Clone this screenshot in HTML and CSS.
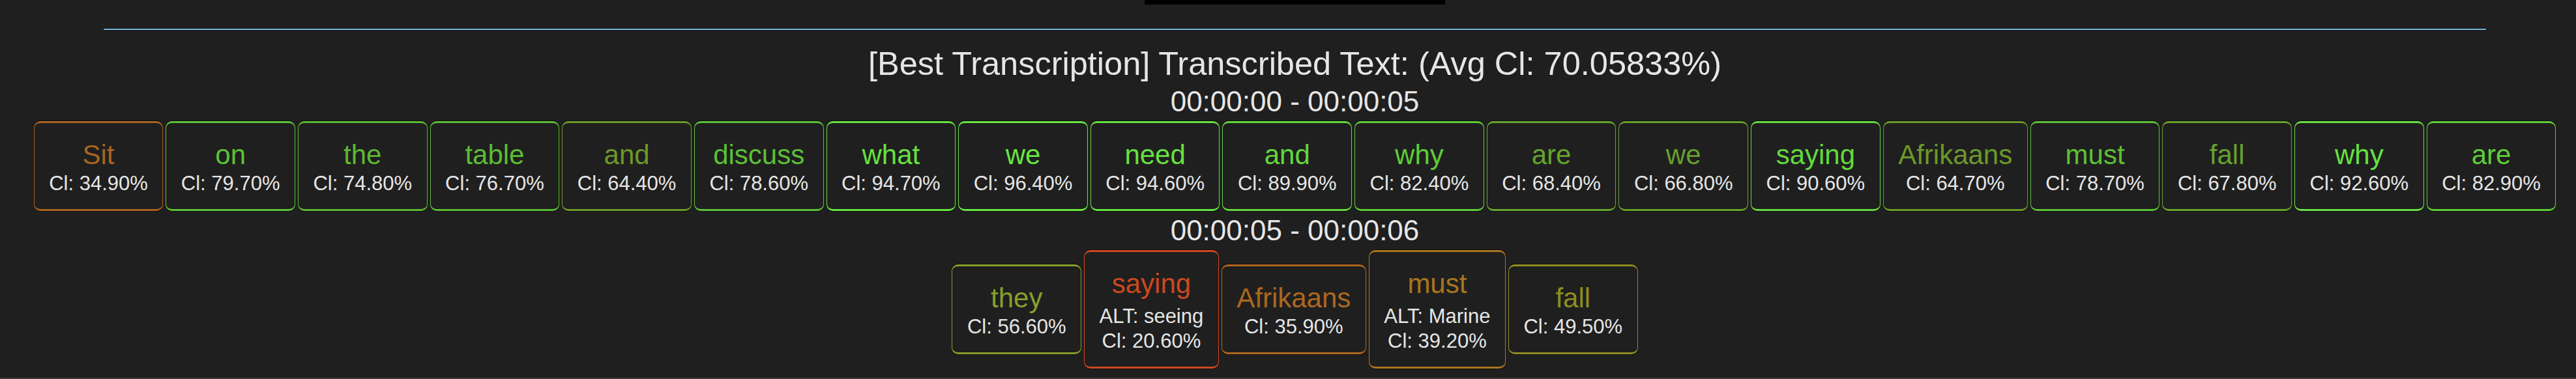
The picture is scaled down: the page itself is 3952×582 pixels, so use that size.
FILE: index.html
```html
<!DOCTYPE html>
<html lang="en">
<head>
<meta charset="utf-8">
<title>Best Transcription</title>
<link rel="stylesheet" href="styles.css">
</head>
<body>
<div class="page">
  <div class="topbar"></div>
  <div class="rule"></div>
  <h1 class="title">[Best Transcription] Transcribed Text: (Avg Cl: 70.05833%)</h1>

  <section class="segment">
    <div class="time">00:00:00 - 00:00:05</div>
    <div class="words">
      <div class="word" style="--c:#a8631f"><div class="w">Sit</div><div class="ci">Cl: 34.90%</div></div>
      <div class="word" style="--c:#5bc335"><div class="w">on</div><div class="ci">Cl: 79.70%</div></div>
      <div class="word" style="--c:#5cb732"><div class="w">the</div><div class="ci">Cl: 74.80%</div></div>
      <div class="word" style="--c:#5bbd33"><div class="w">table</div><div class="ci">Cl: 76.70%</div></div>
      <div class="word" style="--c:#6c982a"><div class="w">and</div><div class="ci">Cl: 64.40%</div></div>
      <div class="word" style="--c:#5bc134"><div class="w">discuss</div><div class="ci">Cl: 78.60%</div></div>
      <div class="word" style="--c:#66e23f"><div class="w">what</div><div class="ci">Cl: 94.70%</div></div>
      <div class="word" style="--c:#68e641"><div class="w">we</div><div class="ci">Cl: 96.40%</div></div>
      <div class="word" style="--c:#66e23f"><div class="w">need</div><div class="ci">Cl: 94.60%</div></div>
      <div class="word" style="--c:#62d83b"><div class="w">and</div><div class="ci">Cl: 89.90%</div></div>
      <div class="word" style="--c:#5ecc38"><div class="w">why</div><div class="ci">Cl: 82.40%</div></div>
      <div class="word" style="--c:#64a52c"><div class="w">are</div><div class="ci">Cl: 68.40%</div></div>
      <div class="word" style="--c:#67a02c"><div class="w">we</div><div class="ci">Cl: 66.80%</div></div>
      <div class="word" style="--c:#63da3c"><div class="w">saying</div><div class="ci">Cl: 90.60%</div></div>
      <div class="word" style="--c:#6b992a"><div class="w">Afrikaans</div><div class="ci">Cl: 64.70%</div></div>
      <div class="word" style="--c:#5bc134"><div class="w">must</div><div class="ci">Cl: 78.70%</div></div>
      <div class="word" style="--c:#65a32c"><div class="w">fall</div><div class="ci">Cl: 67.80%</div></div>
      <div class="word" style="--c:#67e041"><div class="w">why</div><div class="ci">Cl: 92.60%</div></div>
      <div class="word" style="--c:#5ecd38"><div class="w">are</div><div class="ci">Cl: 82.90%</div></div>
    </div>
  </section>

  <section class="segment">
    <div class="time">00:00:05 - 00:00:06</div>
    <div class="words">
      <div class="word" style="--c:#879f2b"><div class="w">they</div><div class="ci">Cl: 56.60%</div></div>
      <div class="word" style="--c:#cc4820"><div class="w">saying</div><div class="alt">ALT: seeing</div><div class="ci">Cl: 20.60%</div></div>
      <div class="word" style="--c:#ad671f"><div class="w">Afrikaans</div><div class="ci">Cl: 35.90%</div></div>
      <div class="word" style="--c:#a9761c"><div class="w">must</div><div class="alt">ALT: Marine</div><div class="ci">Cl: 39.20%</div></div>
      <div class="word" style="--c:#8e8d20"><div class="w">fall</div><div class="ci">Cl: 49.50%</div></div>
    </div>
  </section>
</div>
<div class="bottom-line"></div>
</body>
</html>
```
FILE: styles.css
```css
html, body {
  margin: 0;
  padding: 0;
  background: #1f1f1f;
}

body {
  height: 582px;
  overflow: hidden;
  font-family: "Liberation Sans", Arial, Helvetica, sans-serif;
  color: #e6e6e6;
}

.page {
  padding-left: 21px;
  display: flex;
  flex-direction: column;
  align-items: center;
  text-align: center;
}

.topbar {
  width: 461px;
  height: 7px;
  background: #000;
}

.rule {
  align-self: stretch;
  margin: 36px 137px 0 137px;
  height: 2px;
  background: #7ab9da;
  border: 1px solid #111;
}

.title {
  margin: 23px 0 0;
  font-size: 50.5px;
  line-height: 56px;
  font-weight: normal;
  color: #e6e6e6;
}

.segment {
  display: flex;
  flex-direction: column;
  align-items: center;
}

.time {
  margin-top: 5px;
  font-size: 44px;
  line-height: 50px;
  color: #e6e6e6;
}

.words {
  margin-top: 5px;
  display: flex;
  justify-content: center;
  align-items: center;
  gap: 4px;
}

.word {
  border-style: solid;
  border-color: var(--c);
  border-width: 3px 1.5px;
  border-radius: 10px;
  padding: 24px 22.5px 20px;
  background: #1f1f1f;
  box-shadow: 0 -1px 0 #0e0e0e, 0 1px 0 #0e0e0e;
}

.w {
  font-size: 42px;
  line-height: 50px;
  color: var(--c);
  white-space: nowrap;
}

.ci,
.alt {
  font-size: 31px;
  line-height: 38px;
  color: #e6e6e6;
  white-space: nowrap;
}

.alt {
  margin-top: 6px;
}

.bottom-line {
  margin-top: 14px;
  height: 2px;
  background: #3e3e3e;
}
```
